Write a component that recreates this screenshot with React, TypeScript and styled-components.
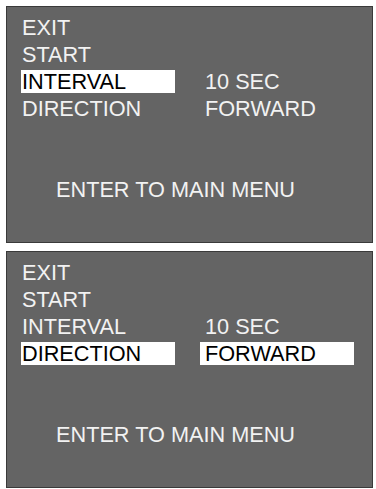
import React from "react";
import styled, { createGlobalStyle } from "styled-components";

const Global = createGlobalStyle`
  html, body { margin: 0; padding: 0; background: #ffffff; }
  body { font-family: "Liberation Sans", Arial, sans-serif; }
`;

const Page = styled.div`
  display: flex;
  flex-direction: column;
  gap: 8px;
  padding: 6px 0 0 6px;
`;

const Panel = styled.div`
  box-sizing: border-box;
  width: 367px;
  height: 237px;
  border: 1px solid #3a3a3a;
  background: #646464;
  padding: 9px 0 0 14px;
  display: flex;
  flex-direction: column;
`;

const Menu = styled.div`
  display: grid;
  grid-template-columns: 154px 154px;
  column-gap: 25px;
  row-gap: 4px;
`;

const Cell = styled.div<{ $selected?: boolean; $value?: boolean }>`
  height: 23px;
  line-height: 23px;
  font-size: 21.7px;
  white-space: nowrap;
  padding-left: ${(p) => (p.$value ? "5px" : "1px")};
  color: ${(p) => (p.$selected ? "#000000" : "#f2f2f2")};
  background: ${(p) => (p.$selected ? "#ffffff" : "transparent")};
`;

const Footer = styled.div`
  margin-top: 58px;
  padding-left: 35px;
  height: 23px;
  line-height: 23px;
  font-size: 21.7px;
  color: #f2f2f2;
  white-space: nowrap;
`;

type Row = { label: string; value?: string };

const rows: Row[] = [
  { label: "EXIT" },
  { label: "START" },
  { label: "INTERVAL", value: "10 SEC" },
  { label: "DIRECTION", value: "FORWARD" },
];

type Sel = { row: number; label: boolean; value: boolean };

const Screen = ({ sel }: { sel: Sel }) => (
  <Panel>
    <Menu>
      {rows.map((r, i) => (
        <React.Fragment key={r.label}>
          <Cell $selected={sel.row === i && sel.label}>{r.label}</Cell>
          <Cell $value $selected={sel.row === i && sel.value && !!r.value}>
            {r.value ?? ""}
          </Cell>
        </React.Fragment>
      ))}
    </Menu>
    <Footer>ENTER TO MAIN MENU</Footer>
  </Panel>
);

export default function App() {
  return (
    <>
      <Global />
      <Page>
        <Screen sel={{ row: 2, label: true, value: false }} />
        <Screen sel={{ row: 3, label: true, value: true }} />
      </Page>
    </>
  );
}
